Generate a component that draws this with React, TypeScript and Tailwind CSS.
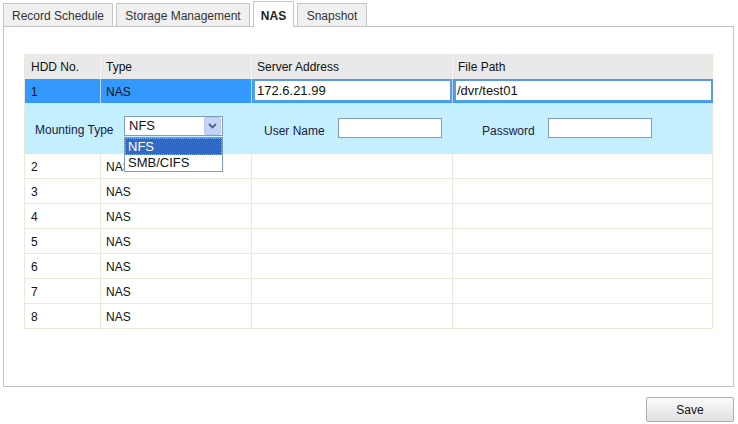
import { useState } from 'react'

const tabs = ['Record Schedule', 'Storage Management', 'NAS', 'Snapshot']
const tabWidths: Record<string, string> = {
  'Record Schedule': 'w-[110px]',
  'Storage Management': 'w-[134px]',
  NAS: 'w-[41px]',
  Snapshot: 'w-[70px]',
}

const rows = [2, 3, 4, 5, 6, 7, 8]

function ChevronDown() {
  return (
    <svg width="9" height="6" viewBox="0 0 9 6">
      <path d="M1 1 L4.5 4.5 L8 1" fill="none" stroke="#4d6185" strokeWidth="1.8" />
    </svg>
  )
}

export default function App() {
  const [active] = useState('NAS')

  return (
    <div className="w-[738px] h-[424px] bg-white text-[12px] text-[#111] overflow-hidden" style={{ fontFamily: '"Liberation Sans", Arial, sans-serif' }}>
      {/* tabs */}
      <div className="flex items-end h-[26px] pl-[3px] gap-[3px]">
        {tabs.map(t =>
          t === active ? (
            <div key={t} className={`${tabWidths[t]} relative z-10 -mb-px h-[26px] pt-[2px] flex items-center justify-center bg-white border border-b-0 border-[#c6c6c6] font-bold text-[#222]`}>
              {t}
            </div>
          ) : (
            <div key={t} className={`${tabWidths[t]} h-[23px] pt-px flex items-center justify-center bg-[#f0f0f0] border border-b-0 border-[#c6c6c6] text-[#333]`}>
              {t}
            </div>
          )
        )}
      </div>

      {/* panel */}
      <div className="ml-[3px] w-[731px] h-[361px] border border-[#c3c3c3] pl-[20px] pt-[27px]">
        <div className="w-[689px] border-l border-[#ece9d8]">
          {/* header */}
          <div className="grid grid-cols-[76px_151px_201px_260px] h-[25px] bg-[#e9e9e9]">
            <div className="pl-[6px] pt-px flex items-center border-r border-[#f4f4f4]">HDD No.</div>
            <div className="pl-[5px] pt-px flex items-center border-r border-[#f4f4f4]">Type</div>
            <div className="pl-[5px] pt-px flex items-center border-r border-[#f4f4f4]">Server Address</div>
            <div className="pl-[5px] pt-px flex items-center border-r border-[#ece9d8]">File Path</div>
          </div>

          {/* selected row */}
          <div className="grid grid-cols-[76px_151px_201px_260px] h-[24px] bg-[#3399ff]">
            <div className="pl-[6px] pt-px flex items-center border-r border-[#b9dcff]">1</div>
            <div className="pl-[5px] pt-px flex items-center border-r border-[#b9dcff]">NAS</div>
            <div className="pl-px border-r border-[#b9dcff] flex items-center">
              <input readOnly value="172.6.21.99" className="w-[199px] h-[23px] -mt-px bg-white border-2 border-[#5b9be0] px-[2px] text-[13px] text-[#111] outline-none" style={{ fontFamily: '"Liberation Sans", Arial, sans-serif' }} />
            </div>
            <div className="pl-px flex items-center">
              <input readOnly value="/dvr/test01" className="w-[259px] h-[23px] -mt-px bg-white border-2 border-[#5b9be0] px-px text-[13px] text-[#111] outline-none" style={{ fontFamily: '"Liberation Sans", Arial, sans-serif' }} />
            </div>
          </div>

          {/* mounting row */}
          <div className="flex h-[51px] bg-[#c4effe] border-r border-[#ece9d8] pl-[10px]">
            <div className="w-[89px] mt-[20px] leading-[14px] text-[#1a1a40]">Mounting Type</div>
            <div className="relative w-[99px] h-[20px] mt-[13px]">
              <div className="flex items-center h-full bg-white border border-[#7f9db9] pl-[4px] text-[13px]">
                <span className="flex-1">NFS</span>
                <div className="w-[17px] h-[18px] mr-px flex items-center justify-center bg-[#c4d4f8] border border-[#b8c8ee] rounded-[2px]">
                  <ChevronDown />
                </div>
              </div>
              <div className="absolute left-0 top-[21px] z-20 w-[99px] bg-white border border-[#7f9db9] text-[13px] leading-[15px]">
                <div className="h-[17px] bg-[#316ac5] text-white pl-[2px] border border-dotted border-[#e7a53a]">NFS</div>
                <div className="h-[16px] pl-[3px]">SMB/CIFS</div>
              </div>
            </div>
            <div className="ml-[41px] w-[74px] mt-[21px] leading-[14px] text-[#1a1a40]">User Name</div>
            <input readOnly className="w-[104px] h-[20px] mt-[15px] bg-white border border-[#7f9db9] outline-none" />
            <div className="ml-[40px] w-[66px] mt-[21px] leading-[14px] text-[#1a1a40]">Password</div>
            <input readOnly type="password" className="w-[104px] h-[20px] mt-[15px] bg-white border border-[#7f9db9] outline-none" />
          </div>

          {/* other rows */}
          {rows.map(n => (
            <div key={n} className="grid grid-cols-[76px_151px_201px_260px] h-[25px] bg-white">
              <div className="pl-[6px] pt-[2px] flex items-center border-r border-b border-[#ece9d8]">{n}</div>
              <div className="pl-[5px] pt-[2px] flex items-center border-r border-b border-[#ece9d8]">NAS</div>
              <div className="border-r border-b border-[#ece9d8]" />
              <div className="border-r border-b border-[#ece9d8]" />
            </div>
          ))}
        </div>
      </div>

      {/* footer */}
      <div className="flex justify-end pr-[4px] mt-[10px]">
        <button className="w-[88px] h-[25px] border border-[#adadad] rounded-[2px] bg-gradient-to-b from-[#fbfbfb] to-[#e1e1e1] text-[12px] text-[#111]">
          Save
        </button>
      </div>
    </div>
  )
}
